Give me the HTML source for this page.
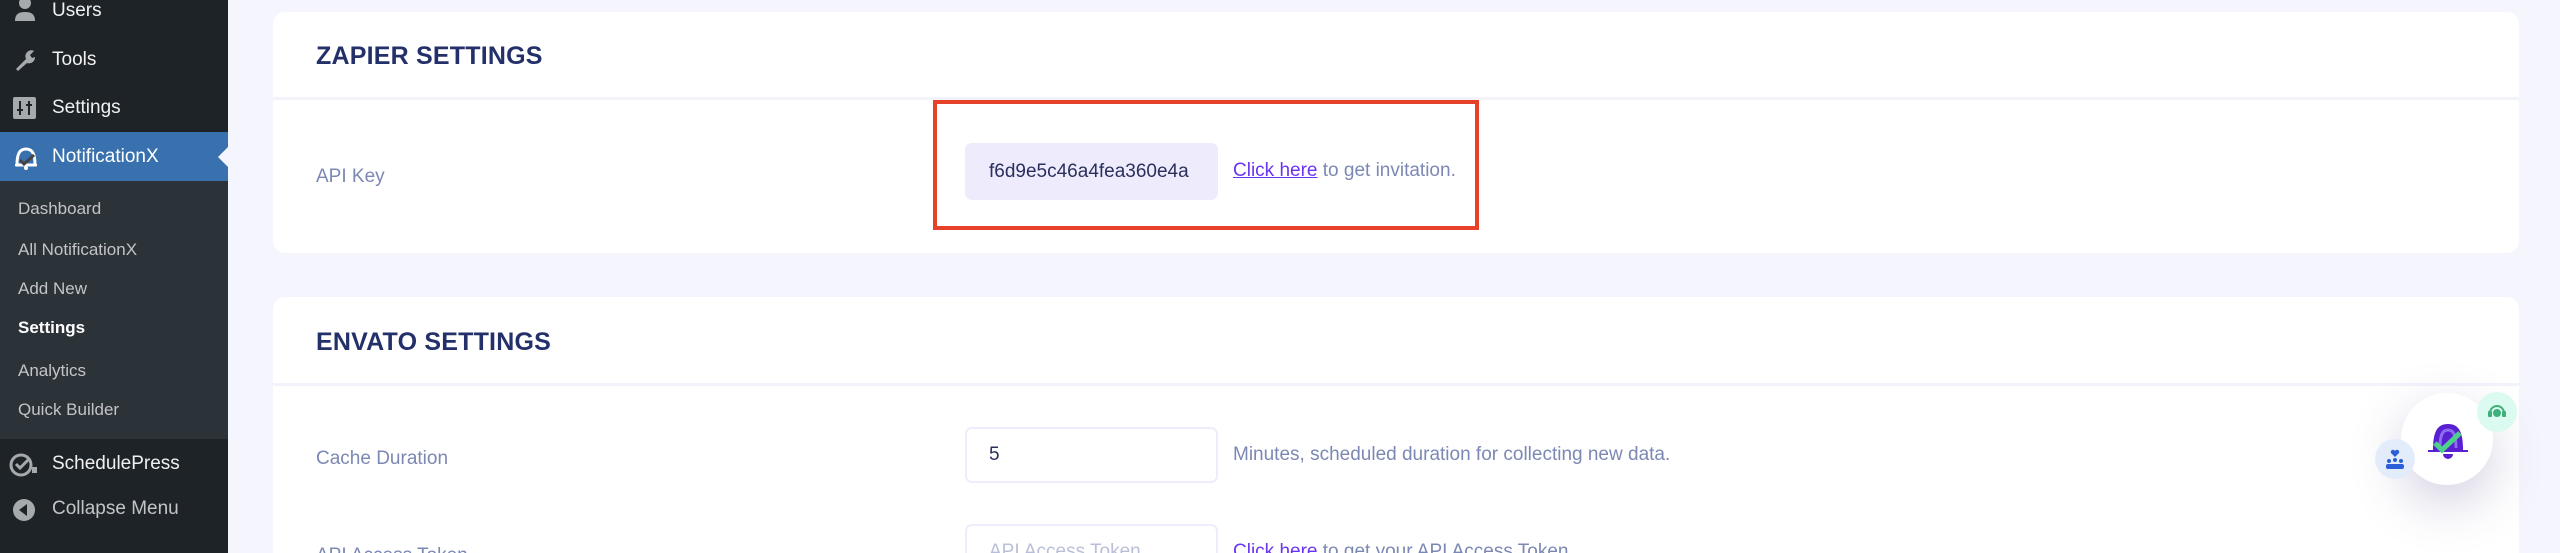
<!DOCTYPE html>
<html style="height:553px;overflow:hidden"><head><meta charset="utf-8"><style>
*{margin:0;padding:0;box-sizing:border-box}
body{width:2560px;height:553px;overflow:hidden;background:#f4f5fd;font-family:"Liberation Sans",Arial,sans-serif;position:relative}
.side{position:absolute;left:0;top:0;width:228px;height:553px;background:#1e2327}
.sub{position:absolute;left:0;top:181px;width:228px;height:258px;background:#2c3338}
.act{position:absolute;left:0;top:132px;width:228px;height:49px;background:#3871ad}
.arrow{position:absolute;left:218px;top:147px;width:0;height:0;border-top:10px solid transparent;border-bottom:10px solid transparent;border-right:10px solid #f4f5fd}
.mi{position:absolute;left:52px;color:#f0f0f1;font-size:19px;line-height:20px}
.si{position:absolute;left:18px;color:#c3c4c7;font-size:17px;line-height:20px}
.ic{position:absolute;left:13px}
.card{position:absolute;left:273px;width:2246px;background:#fff;border-radius:12px;overflow:hidden}
.h{position:absolute;left:43px;font-size:25px;font-weight:bold;color:#24306a;letter-spacing:0.2px}
.div{position:absolute;left:0;right:0;height:3px;background:#f3f3fc}
.lbl{position:absolute;left:43px;font-size:19px;color:#7c88b4}
.inp{position:absolute;left:692px;width:253px;border-radius:7px;font-size:19px;color:#2a2f5c;padding-left:24px;white-space:nowrap;overflow:hidden}
.hint{position:absolute;left:960px;font-size:19px;color:#7c88b4;white-space:nowrap}
.hint a{color:#6a35f2;text-decoration:underline}
</style></head><body>
<div class="side"></div>
<div class="sub"></div>
<div class="act"></div>
<div class="arrow"></div>
<svg class="ic" style="top:0" width="24" height="22" viewBox="0 0 24 22"><circle cx="12" cy="3" r="6" fill="#a7aaad"/><path d="M2 21c0-7 4-9 10-9s10 2 10 9z" fill="#a7aaad"/></svg>
<svg class="ic" style="top:48px" width="24" height="24" viewBox="0 0 24 24"><path d="M3 21l10-10a6 6 0 0 1 8-8l-4 4 2 3 3-1a6 6 0 0 1-8 6L5 23z" fill="#a7aaad"/></svg>
<svg class="ic" style="top:97px" width="23" height="22" viewBox="0 0 23 22"><rect width="23" height="22" rx="2" fill="#a7aaad"/><path d="M7 4v14M4 13h6M16 4v14M13 8h6" stroke="#1e2327" stroke-width="2"/></svg>
<svg class="ic" style="top:144px" width="26" height="26" viewBox="0 0 26 26"><path d="M4 21c0-10 2-16 9-16s9 6 9 16z" fill="none" stroke="#fff" stroke-width="3"/><path d="M2 21h22" stroke="#fff" stroke-width="2"/><circle cx="13" cy="24" r="2" fill="#fff"/><path d="M7 16l4 4 10-9" stroke="#444" stroke-width="3" fill="none"/></svg>
<svg class="ic" style="top:452px;left:8px" width="30" height="26" viewBox="0 0 30 26"><circle cx="13" cy="13" r="10" fill="none" stroke="#a7aaad" stroke-width="3"/><path d="M8 12l4 4 10-10" stroke="#a7aaad" stroke-width="3" fill="none"/><rect x="24" y="15" width="5" height="6" fill="#a7aaad"/></svg>
<svg class="ic" style="top:499px" width="22" height="22" viewBox="0 0 22 22"><circle cx="11" cy="11" r="11" fill="#a7aaad"/><path d="M14 5v12L6 11z" fill="#1e2327"/></svg>
<div class="mi" style="top:1px">Users</div>
<div class="mi" style="top:50px">Tools</div>
<div class="mi" style="top:98px">Settings</div>
<div class="mi" style="top:147px;color:#fff">NotificationX</div>
<div class="si" style="top:199px">Dashboard</div>
<div class="si" style="top:240px">All NotificationX</div>
<div class="si" style="top:279px">Add New</div>
<div class="si" style="top:318px;color:#fff;font-weight:bold">Settings</div>
<div class="si" style="top:361px">Analytics</div>
<div class="si" style="top:400px">Quick Builder</div>
<div class="mi" style="top:454px">SchedulePress</div>
<div class="mi" style="top:499px;color:#c3c4c7">Collapse Menu</div>

<div class="card" style="top:12px;height:241px">
 <div class="h" style="top:30px">ZAPIER SETTINGS</div>
 <div class="div" style="top:85px"></div>
 <div class="lbl" style="top:154px">API Key</div>
 <div class="inp" style="top:131px;height:57px;background:#eeecfc;line-height:57px">f6d9e5c46a4fea360e4a</div>
 <div class="hint" style="top:145px;line-height:28px"><a>Click here</a> to get invitation.</div>
</div>
<div style="position:absolute;left:933px;top:100px;width:546px;height:130px;border:4px solid #e8412a"></div>

<div class="card" style="top:297px;height:256px;border-radius:12px 12px 0 0">
 <div class="h" style="top:31px">ENVATO SETTINGS</div>
 <div class="div" style="top:86px"></div>
 <div class="lbl" style="top:151px">Cache Duration</div>
 <div class="inp" style="top:130px;height:56px;border:2px solid #eceefb;line-height:52px;padding-left:22px">5</div>
 <div class="hint" style="top:147px">Minutes, scheduled duration for collecting new data.</div>
 <div class="lbl" style="top:248px">API Access Token</div>
 <div class="inp" style="top:227px;height:56px;border:2px solid #eceefb;line-height:52px;padding-left:22px;color:#b9bfd9">API Access Token</div>
 <div class="hint" style="top:244px"><a>Click here</a> to get your API Access Token</div>
</div>

<div style="position:absolute;left:2401px;top:393px;width:92px;height:92px;border-radius:50%;background:#fff;box-shadow:0 18px 50px rgba(80,70,140,0.25)"></div>
<svg style="position:absolute;left:2427px;top:418px" width="42" height="42" viewBox="0 0 42 42"><path d="M6 32c0-18 4-26 15-26s15 8 15 26z" fill="#5a1fd1"/><path d="M13 30c0-12 2-18 8-18s8 6 8 18" fill="none" stroke="#8a6ef0" stroke-width="3"/><path d="M1 33h40" stroke="#5a1fd1" stroke-width="2"/><path d="M16 36h10a5 5 0 0 1-10 0z" fill="#5a1fd1"/><path d="M8 25l7 7 18-17" stroke="#4fd08a" stroke-width="5" fill="none"/></svg>
<div style="position:absolute;left:2477px;top:392px;width:40px;height:40px;border-radius:50%;background:#dcfbf0"></div>
<svg style="position:absolute;left:2487px;top:402px" width="20" height="20" viewBox="0 0 20 20"><path d="M3 11a7 7 0 0 1 14 0" fill="none" stroke="#3fb07a" stroke-width="2"/><rect x="1" y="9" width="4" height="6" rx="1" fill="#3fb07a"/><rect x="15" y="9" width="4" height="6" rx="1" fill="#3fb07a"/><circle cx="10" cy="11" r="4" fill="#3fb07a"/></svg>
<div style="position:absolute;left:2375px;top:439px;width:40px;height:40px;border-radius:50%;background:#e3ecfb"></div>
<svg style="position:absolute;left:2385px;top:448px" width="20" height="22" viewBox="0 0 20 22"><path d="M10 9L6 5a2 2 0 0 1 4-2 2 2 0 0 1 4 2z" fill="#2a5fd8"/><circle cx="4" cy="13" r="2" fill="#2a5fd8"/><circle cx="10" cy="12" r="2" fill="#2a5fd8"/><circle cx="16" cy="13" r="2" fill="#2a5fd8"/><rect x="1" y="16" width="18" height="5" rx="2" fill="#2a5fd8"/></svg>
</body></html>
